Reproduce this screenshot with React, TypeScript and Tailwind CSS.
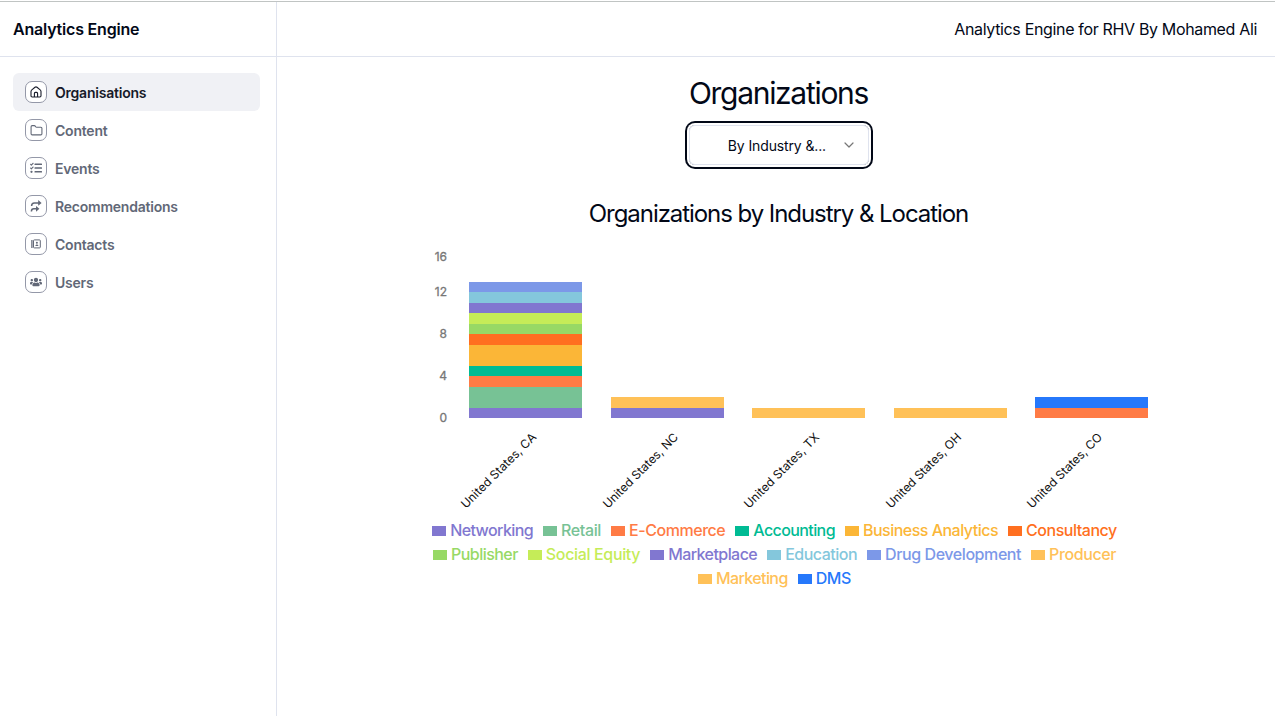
import { ReactNode } from "react";
import { ChevronDown, Folder } from "lucide-react";
import { FaTasks, FaUsers } from "react-icons/fa";

type NavItem = { label: string; icon: ReactNode; active?: boolean };

const navItems: NavItem[] = [
  { label: "Organisations", icon: <HomeIcon />, active: true },
  { label: "Content", icon: <Folder size={13} strokeWidth={2} /> },
  { label: "Events", icon: <FaTasks size={12} /> },
  { label: "Recommendations", icon: <RouteIcon /> },
  { label: "Contacts", icon: <ContactsIcon /> },
  { label: "Users", icon: <FaUsers size={12} /> },
];

function HomeIcon() {
  return (
    <svg width="12" height="12" viewBox="0 0 12 12" fill="none" stroke="currentColor" strokeWidth="1.1" strokeLinejoin="round">
      <path d="M1 5.6C1 4.9 1.3 4.3 1.8 3.9L5 1.3a1.6 1.6 0 0 1 2 0l3.2 2.6c.5.4.8 1 .8 1.7v4.2c0 .7-.5 1.2-1.2 1.2H2.2C1.5 11 1 10.5 1 9.8Z" />
      <path d="M4.4 11V7.4c0-.6.4-1 1-1h1.2c.6 0 1 .4 1 1V11" />
    </svg>
  );
}

function RouteIcon() {
  return (
    <svg width="12" height="12" viewBox="0 0 12 12" fill="none" stroke="currentColor" strokeWidth="1.5">
      <path d="M1.6 6C1.6 4 2.6 2.9 4.4 2.9H9" />
      <path d="M8.2 0 11.6 2.9 8.2 5.8Z" fill="currentColor" stroke="none" />
      <path d="M1.4 11.4C1.4 9.5 2.2 8.7 3.8 8.7H6.8" />
      <path d="M6 6 9.4 8.8 6 11.7Z" fill="currentColor" stroke="none" />
    </svg>
  );
}

function ContactsIcon() {
  return (
    <svg width="12" height="12" viewBox="0 0 12 12" fill="none" stroke="currentColor" strokeWidth="1">
      <rect x="3.5" y="1.9" width="6.8" height="8" rx=".8" />
      <path d="M1.9 2v8" strokeWidth="1.3" />
      <circle cx="6.9" cy="4.8" r="1" fill="currentColor" stroke="none" />
      <path d="M5.4 7.9c0-2 3-2 3 0z" fill="currentColor" stroke="none" />
    </svg>
  );
}

type Segment = { color: string; value: number };

const bars: { name: string; segments: Segment[] }[] = [
  {
    name: "United States, CA",
    segments: [
      { color: "#8177d0", value: 1 },
      { color: "#77c295", value: 2 },
      { color: "#ff7b45", value: 1 },
      { color: "#00bb94", value: 1 },
      { color: "#fbb637", value: 2 },
      { color: "#ff6f20", value: 1 },
      { color: "#97d965", value: 1 },
      { color: "#c5ec58", value: 1 },
      { color: "#8177d0", value: 1 },
      { color: "#84c7dc", value: 1 },
      { color: "#7c98e8", value: 1 },
    ],
  },
  { name: "United States, NC", segments: [{ color: "#8177d0", value: 1 }, { color: "#ffc158", value: 1 }] },
  { name: "United States, TX", segments: [{ color: "#ffc158", value: 1 }] },
  { name: "United States, OH", segments: [{ color: "#ffc158", value: 1 }] },
  { name: "United States, CO", segments: [{ color: "#ff7b45", value: 1 }, { color: "#2678fb", value: 1 }] },
];

const ticks = [
  { value: 16, y: 21 },
  { value: 12, y: 56 },
  { value: 8, y: 98 },
  { value: 4, y: 140 },
  { value: 0, y: 182 },
];

const BASELINE = 178;
const UNIT = 10.5;

function StackedBars() {
  return (
    <svg width="738" height="274" viewBox="-10 4 738 274" className="block">
      {ticks.map((t) => (
        <text key={t.value} x="27" y={t.y} textAnchor="end" fontSize="12" fill="#777" stroke="#777" strokeWidth=".3">
          {t.value}
        </text>
      ))}
      {bars.map((bar, i) => {
        const left = Math.round(49 + i * 141.5);
        let total = 0;
        return (
          <g key={bar.name}>
            {bar.segments.map((s, j) => {
              const bottom = Math.round(BASELINE - total * UNIT);
              total += s.value;
              const top = Math.round(BASELINE - total * UNIT);
              return <rect key={j} x={left} y={top} width="113" height={bottom - top} fill={s.color} />;
            })}
            <text
              transform={`translate(${left + 68} 198) rotate(-45)`}
              textAnchor="end"
              fontSize="12"
              textLength="100.5"
              fill="#111"
            >
              {bar.name}
            </text>
          </g>
        );
      })}
    </svg>
  );
}

const legendRows = [
  [
    { name: "Networking", color: "#8177d0", tracking: "tracking-[-0.6px]" },
    { name: "Retail", color: "#77c295", tracking: "tracking-[-0.37px]" },
    { name: "E-Commerce", color: "#ff7b45", tracking: "tracking-[-0.45px]" },
    { name: "Accounting", color: "#00bb94", tracking: "tracking-[-0.6px]" },
    { name: "Business Analytics", color: "#fbb637", tracking: "tracking-[-0.51px]" },
    { name: "Consultancy", color: "#ff6f20", tracking: "tracking-[-0.47px]" },
  ],
  [
    { name: "Publisher", color: "#97d965", tracking: "tracking-[-0.53px]" },
    { name: "Social Equity", color: "#c5ec58", tracking: "tracking-[-0.35px]" },
    { name: "Marketplace", color: "#8177d0", tracking: "tracking-[-0.56px]" },
    { name: "Education", color: "#84c7dc", tracking: "tracking-[-0.5px]" },
    { name: "Drug Development", color: "#7c98e8", tracking: "tracking-[-0.42px]" },
    { name: "Producer", color: "#ffc158", tracking: "tracking-[-0.4px]" },
  ],
  [
    { name: "Marketing", color: "#ffc158", tracking: "tracking-[-0.6px]" },
    { name: "DMS", color: "#2678fb", tracking: "tracking-[-0.4px]" },
  ],
];

function Legend() {
  return (
    <div className="flex flex-col items-center pr-[9px]">
      {legendRows.map((row, i) => (
        <div key={i} className="flex h-6 gap-2.5">
          {row.map((item) => (
            <div key={item.name} className="flex items-center gap-1" style={{ color: item.color }}>
              <span className="mt-0.5 h-2.5 w-3.5 bg-current" />
              <span className={`text-base font-medium whitespace-nowrap ${item.tracking}`}>{item.name}</span>
            </div>
          ))}
        </div>
      ))}
    </div>
  );
}

export default function App() {
  return (
    <div className="flex h-screen flex-col overflow-hidden bg-white pt-px font-['Inter',sans-serif] text-[#020817]">
      <div className="h-px shrink-0 bg-[#c0c4c3]" />
      <div className="flex min-h-0 flex-1">
        <aside className="flex w-[277px] shrink-0 flex-col border-r border-[#dfe3ee]">
          <div className="flex h-[55px] items-center border-b border-[#dfe3ee] pl-[13px]">
            <span className="text-base font-semibold tracking-[-0.2px]">Analytics Engine</span>
          </div>
          <nav className="flex flex-col pt-4 pr-4 pl-[13px]">
            {navItems.map((item) => (
              <a
                key={item.label}
                className={`flex h-[38px] items-center gap-2 rounded-md px-3 text-sm font-semibold ${
                  item.active ? "bg-[#f0f1f5] text-[#161a29]" : "text-[#626877]"
                }`}
              >
                <span className="flex size-[22px] items-center justify-center rounded-[7px] border border-[#9498a8] bg-white">
                  {item.icon}
                </span>
                <span className="mt-0.5 tracking-[-0.22px]">{item.label}</span>
              </a>
            ))}
          </nav>
        </aside>
        <div className="flex min-w-0 flex-1 flex-col">
          <header className="flex h-[55px] shrink-0 items-center justify-end border-b border-[#dfe3ee] pr-[18px]">
            <span className="text-base tracking-[-0.34px]">Analytics Engine for RHV By Mohamed Ali</span>
          </header>
          <main className="flex flex-col items-center pl-[5px]">
            <h1 className="mt-[18px] text-[30px] leading-9 tracking-[-1.3px]">Organizations</h1>
            <button className="mt-3.5 ml-px flex h-10 w-[180px] items-center justify-end rounded-md border border-[#dfe3ee] pr-[15px] ring-2 ring-[#020817] ring-offset-2">
              <span className="mt-0.5 mr-[15px] text-sm tracking-[-0.13px]">By Industry &amp;...</span>
              <ChevronDown size={16} strokeWidth={1.8} className="-mr-1 text-[#777]" />
            </button>
            <h2 className="mt-[33px] text-2xl tracking-[-1.06px]">Organizations by Industry &amp; Location</h2>
            <div className="mt-3.5 ml-px">
              <StackedBars />
              <Legend />
            </div>
          </main>
        </div>
      </div>
    </div>
  );
}
